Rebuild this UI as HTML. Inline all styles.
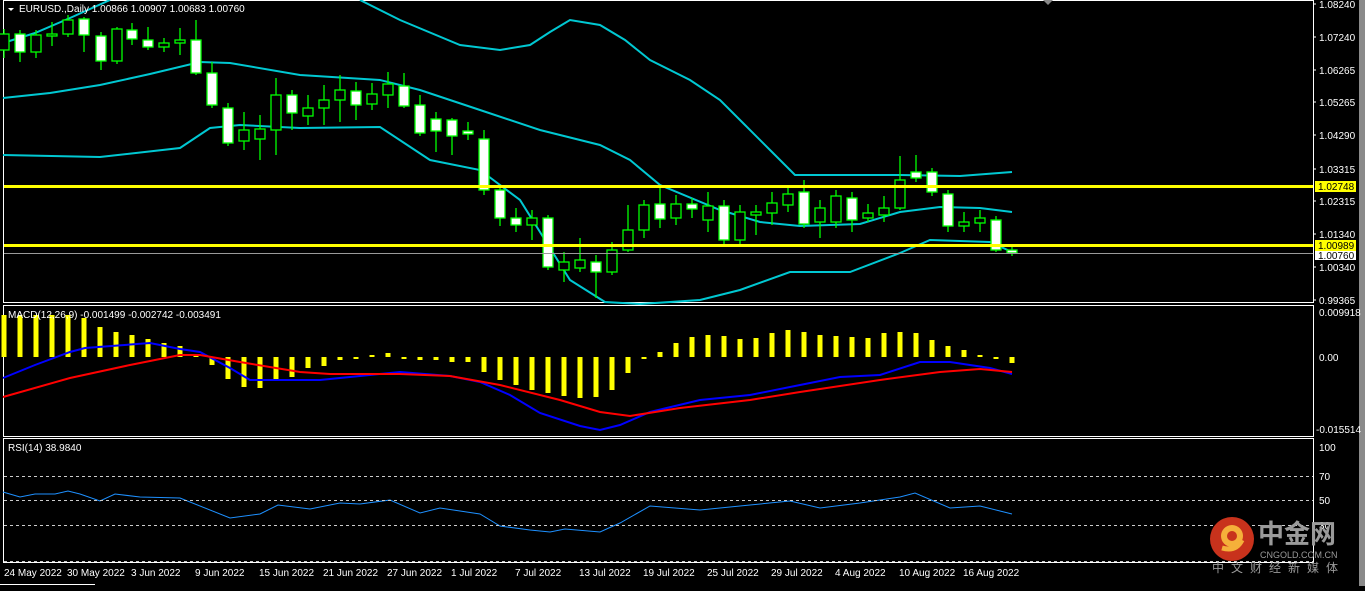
<!DOCTYPE html>
<html><head><meta charset="utf-8"><style>
html,body{margin:0;padding:0;background:#000;}
body{width:1365px;height:586px;overflow:hidden;position:relative;font-family:"Liberation Sans",sans-serif;}
svg text{font-family:"Liberation Sans","Noto Sans CJK SC",sans-serif;}
</style></head><body>
<svg id="s" width="1365" height="586" viewBox="0 0 1365 586" xmlns="http://www.w3.org/2000/svg">
<rect width="1365" height="586" fill="#000"/>
<!-- panel borders -->
<rect x="3.5" y="0.5" width="1310" height="302" fill="none" stroke="#fff"/>
<rect x="3.5" y="305.5" width="1310" height="131" fill="none" stroke="#fff"/>
<rect x="3.5" y="438.5" width="1310" height="124" fill="none" stroke="#fff"/>
<rect x="1359" y="0" width="6" height="586" fill="#8a8a8a"/>
<rect x="1353" y="0" width="6" height="586" fill="#000"/>
<polygon points="1043,0 1053,0 1048,5" fill="#888"/>
<g id="g"></g>
<!-- yellow lines -->
<rect x="4" y="185" width="1309" height="3" fill="#ffff00"/>
<rect x="4" y="244" width="1309" height="3" fill="#ffff00"/>
<line x1="4" y1="253.5" x2="1313" y2="253.5" stroke="#9a9a9a"/>
<!-- right axis labels -->
<g font-size="10" fill="#fff">
<text x="1319" y="8">1.08240</text>
<text x="1319" y="41">1.07240</text>
<text x="1319" y="74">1.06265</text>
<text x="1319" y="106">1.05265</text>
<text x="1319" y="139">1.04290</text>
<text x="1319" y="173">1.03315</text>
<text x="1319" y="205">1.02315</text>
<text x="1319" y="238">1.01340</text>
<text x="1319" y="271">1.00340</text>
<text x="1319" y="304">0.99365</text>
<text x="1319" y="316">0.009918</text>
<text x="1319" y="361">0.00</text>
<text x="1316" y="433">-0.015514</text>
<text x="1319" y="451">100</text>
<text x="1319" y="480">70</text>
<text x="1319" y="504">50</text>
<text x="1319" y="529">30</text>
</g>
<rect x="1315" y="181" width="41" height="11" fill="#ffff00"/>
<text x="1318" y="190" font-size="10" fill="#000">1.02748</text>
<rect x="1315" y="240" width="41" height="11" fill="#ffff00"/>
<text x="1318" y="249" font-size="10" fill="#000">1.00989</text>
<rect x="1315" y="251" width="41" height="9" fill="#fff"/>
<text x="1318" y="259" font-size="10" fill="#000">1.00760</text>
<g stroke="#fff">
<line x1="1313" y1="4" x2="1316" y2="4"/><line x1="1313" y1="37" x2="1316" y2="37"/><line x1="1313" y1="70" x2="1316" y2="70"/><line x1="1313" y1="102" x2="1316" y2="102"/><line x1="1313" y1="135" x2="1316" y2="135"/><line x1="1313" y1="169" x2="1316" y2="169"/><line x1="1313" y1="201" x2="1316" y2="201"/><line x1="1313" y1="234" x2="1316" y2="234"/><line x1="1313" y1="267" x2="1316" y2="267"/><line x1="1313" y1="300" x2="1316" y2="300"/>
</g>
<!-- titles -->
<polygon points="8,8 14,8 11,11" fill="#fff"/>
<text x="19" y="12" font-size="10" fill="#fff">EURUSD.,Daily  1.00866 1.00907 1.00683 1.00760</text>
<text x="8" y="318" font-size="10" fill="#fff">MACD(12,26,9) -0.001499 -0.002742 -0.003491</text>
<text x="8" y="451" font-size="10" fill="#fff">RSI(14) 38.9840</text>
<!-- RSI levels -->
<g stroke="#ccc" stroke-dasharray="3,3">
<line x1="4" y1="476.5" x2="1313" y2="476.5"/>
<line x1="4" y1="500.5" x2="1313" y2="500.5"/>
<line x1="4" y1="525.5" x2="1313" y2="525.5"/>
<line x1="4" y1="561.5" x2="1313" y2="561.5"/>
</g>
<!-- dates -->
<g font-size="10" fill="#fff">
<text x="4" y="576">24 May 2022</text><text x="67" y="576">30 May 2022</text><text x="131" y="576">3 Jun 2022</text><text x="195" y="576">9 Jun 2022</text><text x="259" y="576">15 Jun 2022</text><text x="323" y="576">21 Jun 2022</text><text x="387" y="576">27 Jun 2022</text><text x="451" y="576">1 Jul 2022</text><text x="515" y="576">7 Jul 2022</text><text x="579" y="576">13 Jul 2022</text><text x="643" y="576">19 Jul 2022</text><text x="707" y="576">25 Jul 2022</text><text x="771" y="576">29 Jul 2022</text><text x="835" y="576">4 Aug 2022</text><text x="899" y="576">10 Aug 2022</text><text x="963" y="576">16 Aug 2022</text>
</g>
<line x1="0" y1="584.5" x2="95" y2="584.5" stroke="#fff"/>
<!-- logo -->
<circle cx="1232" cy="539" r="22" fill="#c8321c"/>
<circle cx="1232" cy="536" r="11" fill="#f5b03a"/>
<circle cx="1232" cy="536" r="5" fill="#c8321c"/>
<path d="M1222 548 Q1236 552 1242 540" stroke="#f5b03a" stroke-width="5" fill="none"/>
<text x="1258" y="543" font-size="26" font-weight="bold" fill="#9a9a9a">中金网</text>
<text x="1260" y="558" font-size="9" fill="#9a9a9a">CNGOLD.COM.CN</text>
<text x="1212" y="572" font-size="12" fill="#9a9a9a" letter-spacing="7">中文财经新媒体</text>
</svg>
<script>
const g=document.getElementById('g');let h='';
function pl(pts,c,w){h+=`<polyline points="${pts}" fill="none" stroke="${c}" stroke-width="${w||2}"/>`;}
// bollinger
pl("3,43 35,33 70,18 110,0","#00c8d2");
pl("360,0 400,20 460,45 500,50 530,45 550,32 570,20 600,25 625,40 650,60 690,80 720,100 745,125 770,150 795,175 850,175 900,175 960,176 1012,172","#00c8d2");
pl("3,98 50,93 100,85 150,74 200,62 230,63 300,75 380,80 420,90 480,110 540,130 600,145 630,160 660,185 720,210 760,222 800,226 860,224 900,212 940,207 980,208 1012,212","#00c8d2");
pl("3,155 100,157 180,148 195,138 210,128 240,125 300,128 380,127 430,160 480,170 520,200 545,240 570,280 605,302 640,304 700,300 740,290 790,272 850,272 900,253 930,240 990,242 1012,252","#00c8d2");
// candles: x,top,bottom,white,wickTop,wickBot
const c=[[4,34,50,0,29,58],[20,34,52,1,30,62],[36,35,52,0,30,58],[52,34,36,0,22,46],[68,20,34,0,15,37],[84,19,35,1,17,52],[101,36,61,1,32,70],[117,29,61,0,27,64],[132,30,39,1,23,45],[148,40,47,1,27,50],[164,43,47,0,38,52],[180,40,43,0,28,55],[196,40,73,1,20,75],[212,73,105,1,62,108],[228,108,143,1,103,146],[244,130,141,0,112,150],[260,129,139,0,115,160],[276,95,130,0,78,155],[292,95,113,1,90,130],[308,108,116,0,95,125],[324,100,108,0,85,125],[340,90,100,0,75,122],[356,91,105,1,82,120],[372,94,104,0,83,110],[388,84,95,0,72,108],[404,86,106,1,73,108],[420,105,133,1,95,136],[436,119,131,1,112,152],[452,120,136,1,118,155],[468,131,134,1,122,140],[484,139,190,1,130,195],[500,190,218,1,185,226],[516,218,225,1,208,232],[532,218,225,0,210,240],[548,218,267,1,215,270],[564,262,270,0,252,282],[580,260,268,0,238,272],[596,262,272,1,255,298],[612,250,272,0,242,275],[628,230,250,0,205,252],[644,205,230,0,200,238],[660,204,219,1,188,228],[676,204,218,0,195,225],[692,204,209,1,198,218],[708,206,220,0,192,232],[724,206,240,1,200,244],[740,212,240,0,205,244],[756,212,215,0,205,235],[772,203,213,0,192,225],[788,194,205,0,185,212],[804,192,224,1,180,228],[820,208,222,0,200,238],[836,196,222,0,190,228],[852,198,220,1,192,232],[868,213,218,0,204,222],[884,208,215,0,196,222],[900,180,208,0,156,210],[916,172,178,1,155,182],[932,172,192,1,168,196],[948,194,226,1,190,232],[964,222,226,0,212,232],[980,218,223,0,210,232],[996,220,250,1,216,252],[1012,250,253,1,246,256]];
for(const [x,t,b,w,wt,wb] of c){h+=`<line x1="${x}" y1="${wt}" x2="${x}" y2="${wb}" stroke="#00ff00" stroke-width="1.3"/>`;
h+=`<rect x="${x-5}" y="${t}" width="10" height="${Math.max(b-t,1)}" fill="${w?'#fff':'#000'}" stroke="#00ff00" stroke-width="1.3"/>`;}
// macd hist
const mh=[315,315,315,315,315,318,327,332,335,339,343,346,354,365,379,387,388,379,377,368,366,360,358,355,353,357,360,360,362,362,372,380,385,390,393,396,398,397,390,373,358,352,343,337,335,336,339,338,333,330,332,335,336,337,338,333,332,333,340,346,350,355,357,363];
for(let i=0;i<mh.length;i++){const x=4+16*i,v=mh[i];const y=Math.min(v,357),hh=Math.max(Math.abs(v-357),2);h+=`<rect x="${x-2.5}" y="${y}" width="5" height="${hh}" fill="#ffff00"/>`;}
pl("3,378 35,365 70,352 85,348 150,343 180,349 200,352 230,368 250,380 320,380 370,375 400,372 450,376 480,382 510,395 540,413 580,426 600,430 620,425 650,412 700,400 750,395 800,385 840,377 880,375 920,362 950,362 990,368 1012,374","#0000ff");
pl("3,397 70,378 130,365 180,355 200,355 240,362 300,372 330,374 400,374 450,376 500,385 560,400 600,412 630,416 680,408 750,400 800,392 880,380 940,372 980,369 1012,372","#ff0000");
pl("3,492 20,497 35,494 55,494 68,491 80,494 100,501 115,494 140,497 180,498 230,518 260,514 278,505 310,509 340,503 360,504 390,500 420,513 440,508 480,514 500,526 530,530 550,532 565,529 600,532 620,523 650,506 700,510 750,505 790,501 820,508 860,503 900,497 915,493 950,508 980,506 1012,514","#1e90ff",1);
g.innerHTML=h;
</script>
</body></html>
